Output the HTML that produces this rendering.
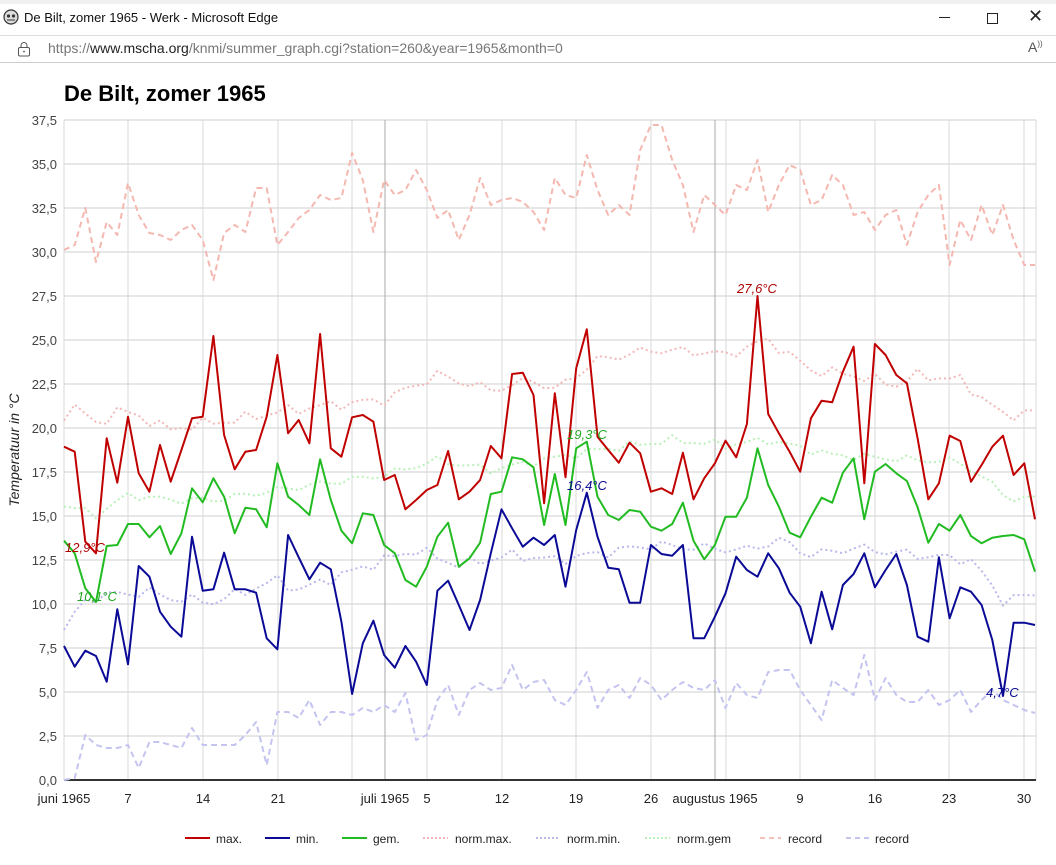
<!DOCTYPE html>
<html><head><meta charset="utf-8">
<style>
html,body{margin:0;padding:0;background:#fff;width:1056px;height:865px;overflow:hidden;font-family:"Liberation Sans",Arial,sans-serif;}
#top{position:absolute;left:0;top:0;width:1056px;height:35px;background:#fff;border-bottom:1px solid #ddd;}
#addr{position:absolute;left:0;top:36px;width:1056px;height:26px;background:#fff;border-bottom:1px solid #ccc;}
svg text{font-family:"Liberation Sans",Arial,sans-serif;}
</style></head><body>
<div id="top">
 <div style="position:absolute;left:0;top:0;width:1056px;height:4px;background:#f0f0f0"></div>
 <svg style="position:absolute;left:3px;top:9px" width="16" height="16" viewBox="0 0 16 16"><circle cx="8" cy="8" r="7" fill="#ddd" stroke="#333" stroke-width="1.2"/><circle cx="5.5" cy="7" r="1.6" fill="#333"/><circle cx="10.5" cy="7" r="1.6" fill="#333"/><path d="M4 11h8" stroke="#333"/></svg>
 <div style="position:absolute;left:24px;top:10px;font-size:13px;color:#111">De Bilt, zomer 1965 - Werk - Microsoft Edge</div>
 <div style="position:absolute;left:939px;top:17px;width:11px;height:1px;background:#222"></div>
 <div style="position:absolute;left:987px;top:13px;width:9px;height:9px;border:1px solid #222"></div>
 <div style="position:absolute;left:1028px;top:6px;font-size:18px;color:#222">✕</div>
</div>
<div id="addr">
 <svg style="position:absolute;left:17px;top:5px" width="14" height="16" viewBox="0 0 14 16"><rect x="1.5" y="6.5" width="11" height="8.5" rx="1.5" fill="none" stroke="#555"/><path d="M4 6.5V4.5a3 3 0 0 1 6 0v2" fill="none" stroke="#555"/><circle cx="7" cy="10.5" r="0.9" fill="#555"/></svg>
 <div style="position:absolute;left:48px;top:4px;font-size:14px;color:#777">https://<span style="color:#222">www.mscha.org</span>/knmi/summer_graph.cgi?station=260&amp;year=1965&amp;month=0</div>
 <div style="position:absolute;left:1028px;top:3px;font-size:14px;color:#555">A<sup style="font-size:8px">))</sup></div>
</div>
<svg id="ch" style="position:absolute;left:0;top:0" width="1056" height="865">
 <text x="64" y="101" font-size="22" font-weight="bold" fill="#000">De Bilt, zomer 1965</text>
 <g id="grid"></g>
 <g id="lines"></g>
 <text transform="translate(19,450) rotate(-90)" text-anchor="middle" font-size="14" font-style="italic" fill="#222">Temperatuur in °C</text>
 <g font-size="13" fill="#222" text-anchor="middle">
  <text x="64" y="803">juni 1965</text><text x="128" y="803">7</text><text x="203" y="803">14</text><text x="278" y="803">21</text>
  <text x="385" y="803">juli 1965</text><text x="427" y="803">5</text><text x="502" y="803">12</text><text x="576" y="803">19</text>
  <text x="651" y="803">26</text><text x="715" y="803">augustus 1965</text><text x="800" y="803">9</text><text x="875" y="803">16</text>
  <text x="949" y="803">23</text><text x="1024" y="803">30</text>
 </g>
 <g font-size="13" font-style="italic">
  <text x="65" y="552" fill="#b00000">12,9°C</text>
  <text x="77" y="601" fill="#22aa22">10,1°C</text>
  <text x="567" y="439" fill="#22aa22">19,3°C</text>
  <text x="567" y="490" fill="#0a0a90">16,4°C</text>
  <text x="737" y="293" fill="#b00000">27,6°C</text>
  <text x="986" y="697" fill="#0a0a90">4,7°C</text>
 </g>
 <g font-size="12" fill="#222">
  <line x1="185" y1="838" x2="210" y2="838" stroke="#c00000" stroke-width="2"/><text x="216" y="843">max.</text>
  <line x1="265" y1="838" x2="290" y2="838" stroke="#0a0a96" stroke-width="2"/><text x="296" y="843">min.</text>
  <line x1="342" y1="838" x2="367" y2="838" stroke="#22bb22" stroke-width="2"/><text x="373" y="843">gem.</text>
  <line x1="423" y1="838" x2="448" y2="838" stroke="#f0b8b8" stroke-width="2" stroke-dasharray="2,2"/><text x="455" y="843">norm.max.</text>
  <line x1="536" y1="838" x2="560" y2="838" stroke="#b8b8ec" stroke-width="2" stroke-dasharray="2,2"/><text x="567" y="843">norm.min.</text>
  <line x1="645" y1="838" x2="670" y2="838" stroke="#b8f0b8" stroke-width="2" stroke-dasharray="2,2"/><text x="677" y="843">norm.gem</text>
  <line x1="760" y1="838" x2="781" y2="838" stroke="#f4c0b8" stroke-width="2" stroke-dasharray="5,4"/><text x="788" y="843">record</text>
  <line x1="846" y1="838" x2="869" y2="838" stroke="#c4c4f0" stroke-width="2" stroke-dasharray="5,4"/><text x="875" y="843">record</text>
 </g>
</svg>
<script>
var NS="http://www.w3.org/2000/svg";
function el(p,t,a){var e=document.createElementNS(NS,t);for(var k in a)e.setAttribute(k,a[k]);p.appendChild(e);return e;}
var g=document.getElementById('grid');
for(var i=0;i<=15;i++){var y=120+i*44;el(g,'line',{x1:64,x2:1036,y1:y,y2:y,stroke:'#cfcfcf','stroke-width':1});
 var v=(37.5-i*2.5).toFixed(1).replace('.',',');var t=el(g,'text',{x:57,y:y+5,'text-anchor':'end','font-size':13,fill:'#444'});t.textContent=v;}
var vx=[64,128,203,278,352,427,502,576,651,726,800,875,949,1024,1036];
vx.forEach(function(x){el(g,'line',{x1:x,x2:x,y1:120,y2:780,stroke:'#d8d8d8'});});
[385,715].forEach(function(x){el(g,'line',{x1:x,x2:x,y1:120,y2:780,stroke:'#a8a8a8'});});
el(g,'line',{x1:64,x2:1036,y1:780,y2:780,stroke:'#333','stroke-width':2});
function X(i){return 64+i*10.67;}
function zc(a){return a.map(function(z){return 270+z/3;});}
var red=zc([530,545,815,850,505,638,440,610,665,525,635,540,445,440,198,495,598,545,540,440,255,490,450,520,192,535,560,442,435,455,630,615,
718,690,660,645,543,688,665,630,528,565,312,308,375,700,370,622,295,178,500,540,578,518,550,665,655,672,548,688,625,580,
512,562,462,78,432,490,545,605,445,392,397,305,230,640,222,255,315,340,505,688,640,497,513,635,585,530,497,615,580,748]);
var grn=zc([812,850,955,996,828,825,762,762,802,768,852,790,655,697,625,680,790,713,718,772,580,680,705,735,568,690,782,820,730,735,825,850,
930,950,890,800,758,890,865,818,672,665,562,568,592,765,612,765,535,515,680,735,750,720,725,770,782,762,698,812,868,825,
740,740,683,535,645,710,788,802,740,683,698,608,565,748,605,582,610,633,712,818,762,782,735,798,820,803,798,795,808,905]);
var blu=zc([1128,1190,1142,1158,1235,1018,1183,888,920,1025,1070,1100,800,962,958,848,958,958,968,1105,1138,795,862,928,878,898,1055,1272,1120,1052,1155,1193,
1128,1175,1245,962,932,1005,1080,990,850,718,775,830,803,825,795,950,780,668,800,893,898,998,998,825,852,857,825,1105,1105,1040,
970,860,900,920,850,895,968,1010,1120,965,1078,945,912,850,952,900,852,945,1100,1115,862,1045,952,965,1005,1110,1278,1058,1058,1065]);
var rmax=[250,245,208,262,222,235,183,215,233,235,240,230,225,240,280,233,225,232,188,188,245,232,218,210,195,200,198,153,180,232,180,195,190,170,190,218,210,240,215,178,205,200,198,202,212,230,178,195,198,155,190,215,205,215,150,125,125,160,185,232,195,205,215,185,190,160,212,185,165,170,205,200,175,185,215,212,230,215,210,245,212,195,185,265,220,240,205,235,205,240,265,265];
var rmin=[780,778,735,745,748,748,745,768,742,742,745,748,728,745,745,745,745,735,722,765,712,712,718,700,725,712,712,715,708,712,705,712,693,740,735,700,685,715,690,683,690,688,665,690,682,680,700,705,690,672,708,690,685,698,678,685,700,690,682,688,690,680,708,683,695,698,672,670,670,690,705,720,680,688,695,655,700,678,695,702,702,690,705,700,690,712,700,690,700,705,710,713];
function interp(k){var out=[];for(var i=0;i<k.length-1;i++){var a=k[i],b=k[i+1];for(var d=a[0];d<b[0];d++)out.push(a[1]+(b[1]-a[1])*(d-a[0])/(b[0]-a[0]));}out.push(k[k.length-1][1]);return out;}
function wob(arr,amp,seed){return arr.map(function(v,i){return v+amp*Math.sin(i*1.7+seed)+amp*0.6*Math.sin(i*3.1+seed*2);});}
var nmax=wob(interp([[0,415],[1,405],[3,425],[5,410],[8,420],[10,430],[12,425],[16,420],[20,412],[25,405],[30,400],[35,375],[40,390],[44,380],[46,390],[50,360],[55,350],[60,352],[62,355],[66,340],[70,370],[74,375],[78,385],[80,375],[84,380],[88,415],[91,412]]),4,1);
var ngem=wob(interp([[0,505],[3,515],[6,495],[10,500],[14,500],[20,490],[30,475],[35,460],[40,470],[45,460],[50,450],[57,440],[62,445],[66,440],[72,455],[80,460],[84,462],[89,500],[91,498]]),3,2);
var nmin=wob(interp([[0,630],[2,600],[4,595],[8,592],[10,598],[14,602],[20,580],[22,590],[26,575],[30,560],[33,550],[37,565],[42,555],[46,560],[51,552],[55,545],[60,548],[64,550],[67,540],[70,555],[74,548],[80,555],[85,560],[88,600],[91,595]]),4,3);
var L=document.getElementById('lines');
function pl(arr,c,w,da){var s=arr.map(function(y,i){return X(i).toFixed(1)+','+y.toFixed(1);}).join(' ');var a={points:s,fill:'none',stroke:c,'stroke-width':w,'stroke-linejoin':'round'};if(da)a['stroke-dasharray']=da;el(L,'polyline',a);}
pl(rmax,'#f4b8b0',2,'6,4');
pl(rmin,'#c4c4f0',2,'6,4');
pl(nmax,'#f2b8b8',2,'2,3');
pl(ngem,'#b8f0b8',2,'2,3');
pl(nmin,'#b8b8ec',2,'2,3');
pl(red,'#c00000',2);
pl(grn,'#22bb22',2);
pl(blu,'#0a0a96',2);
</script>
</body></html>
